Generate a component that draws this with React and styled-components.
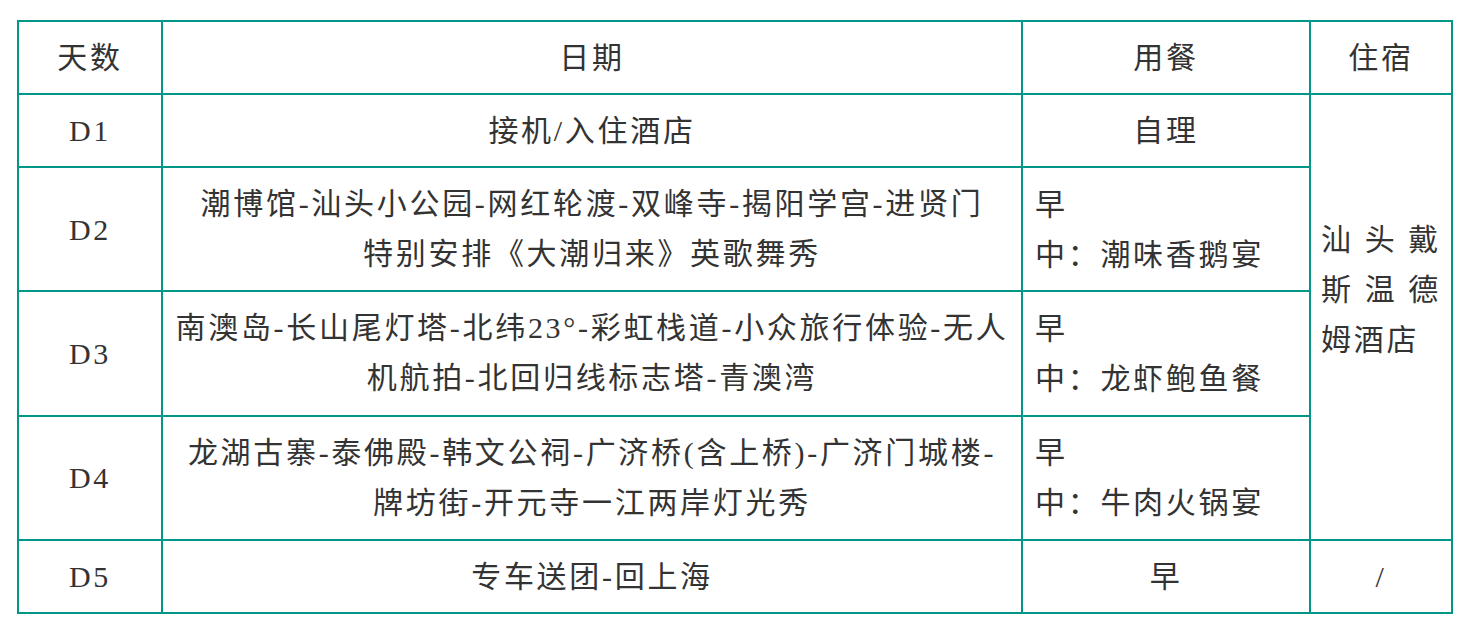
import React from "react";
import styled, { createGlobalStyle } from "styled-components";

const Global = createGlobalStyle`
  html, body { margin: 0; padding: 0; background: #fff; }
  body {
    font-family: "Liberation Serif", "Noto Sans CJK SC", serif;
    color: #333;
  }
`;

const Page = styled.div`
  padding: 20px 0 0 17px;
`;

const Table = styled.table`
  border-collapse: collapse;
  table-layout: fixed;
  width: 1436px;
  font-size: 30px;
  line-height: 50px;
  letter-spacing: 2.7px;
`;

const Cell = styled.td`
  border: 2px solid #009688;
  padding: 11px 10px ${(p) => (p.$tall ? "11.4px" : "10px")};
  text-align: ${(p) => p.$align || "center"};
  vertical-align: middle;
  font-weight: normal;
`;

const HeadCell = styled(Cell).attrs({ as: "th" })``;

const RouteCell = styled(Cell)`
  white-space: nowrap;
  padding-left: 4px;
  padding-right: 4px;
`;

const HotelCell = styled(Cell)`
  text-align: justify;
  text-align-last: left;
  padding: 10px 10px 64px;
  word-break: break-all;
`;

const MealCell = styled(Cell)`
  padding-left: 12px;
`;

const rows = [
  { day: "D1", route: ["接机/入住酒店"], meal: ["自理"], center: true },
  {
    day: "D2",
    route: ["潮博馆-汕头小公园-网红轮渡-双峰寺-揭阳学宫-进贤门", "特别安排《大潮归来》英歌舞秀"],
    meal: ["早", "中：潮味香鹅宴"],
  },
  {
    day: "D3",
    route: ["南澳岛-长山尾灯塔-北纬23°-彩虹栈道-小众旅行体验-无人", "机航拍-北回归线标志塔-青澳湾"],
    meal: ["早", "中：龙虾鲍鱼餐"],
  },
  {
    day: "D4",
    route: ["龙湖古寨-泰佛殿-韩文公祠-广济桥(含上桥)-广济门城楼-", "牌坊街-开元寺一江两岸灯光秀"],
    meal: ["早", "中：牛肉火锅宴"],
  },
];

const Lines = ({ lines }) =>
  lines.map((l, i) => (
    <React.Fragment key={i}>
      {i > 0 && <br />}
      {l}
    </React.Fragment>
  ));

export default function App() {
  return (
    <Page>
      <Global />
      <Table>
        <colgroup>
          <col style={{ width: 144 }} />
          <col style={{ width: 860 }} />
          <col style={{ width: 288 }} />
          <col style={{ width: 142 }} />
        </colgroup>
        <thead>
          <tr>
            <HeadCell>天数</HeadCell>
            <HeadCell>日期</HeadCell>
            <HeadCell>用餐</HeadCell>
            <HeadCell>住宿</HeadCell>
          </tr>
        </thead>
        <tbody>
          {rows.map((r, i) => (
            <tr key={r.day}>
              <Cell>{r.day}</Cell>
              <RouteCell $tall={r.route.length > 1}>
                <Lines lines={r.route} />
              </RouteCell>
              {r.center ? (
                <Cell>
                  <Lines lines={r.meal} />
                </Cell>
              ) : (
                <MealCell $align="left">
                  <Lines lines={r.meal} />
                </MealCell>
              )}
              {i === 0 && <HotelCell rowSpan={4}>汕头戴斯温德姆酒店</HotelCell>}
            </tr>
          ))}
          <tr>
            <Cell>D5</Cell>
            <RouteCell>专车送团-回上海</RouteCell>
            <Cell>早</Cell>
            <Cell>/</Cell>
          </tr>
        </tbody>
      </Table>
    </Page>
  );
}
